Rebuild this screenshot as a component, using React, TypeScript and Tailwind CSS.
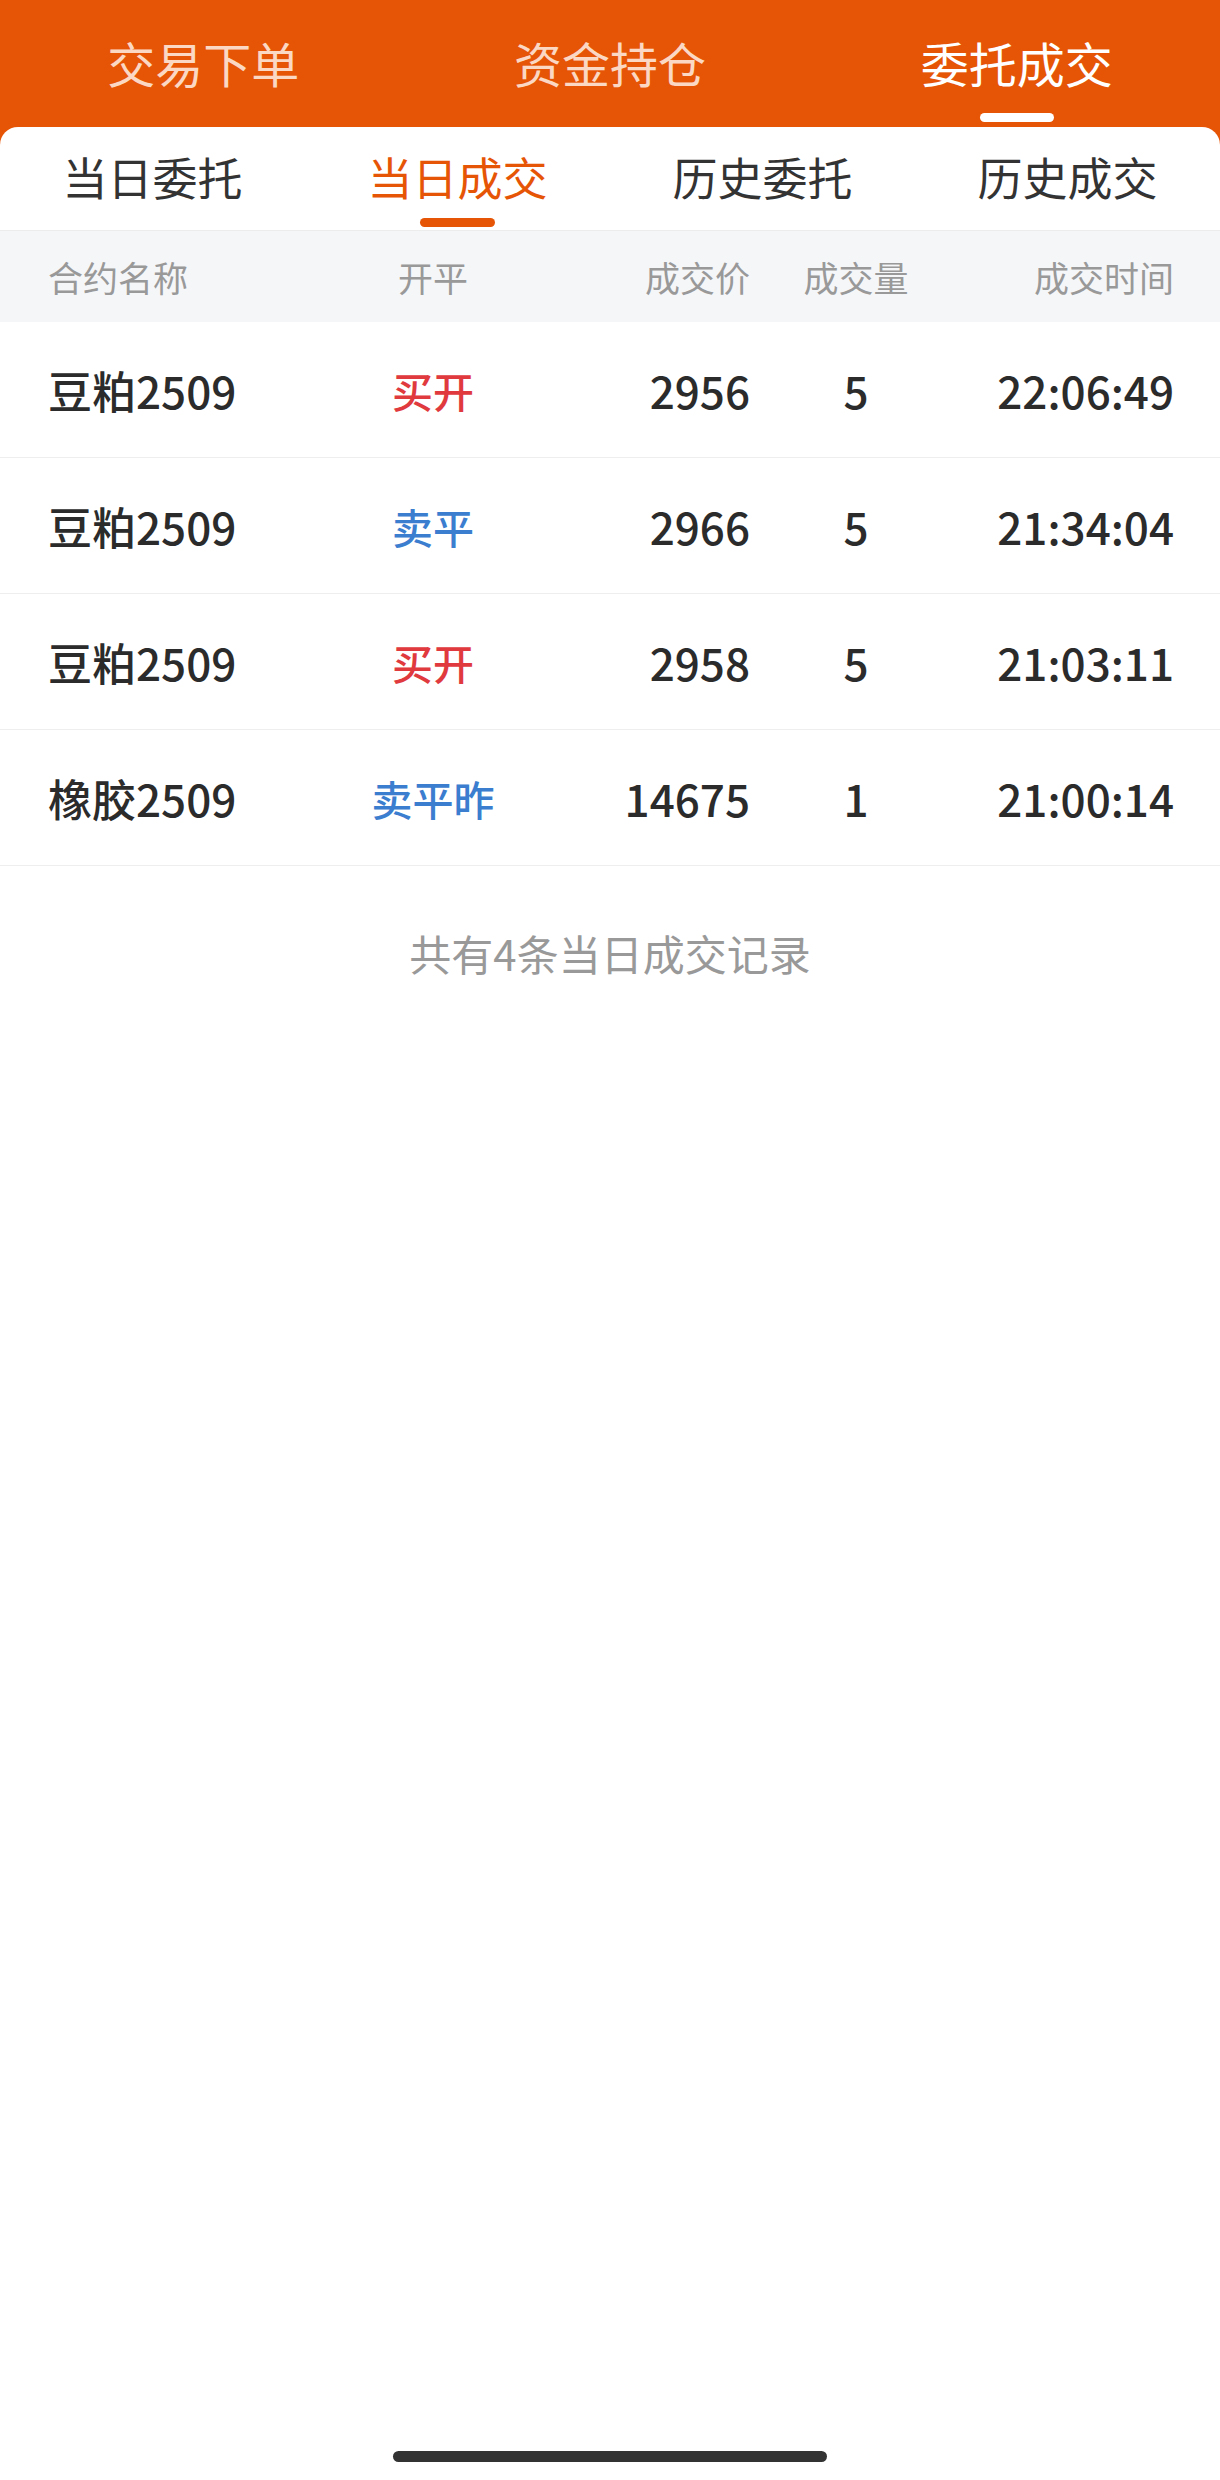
import React, { useState } from "react";

// --- Types ---
interface Trade {
  id: string;
  name: string;
  side: string;
  price: string;
  volume: string;
  time: string;
}

const trades: Trade[] = [
  { id: "1", name: "豆粕2509", side: "买开", price: "2956", volume: "5", time: "22:06:49" },
  { id: "2", name: "豆粕2509", side: "卖平", price: "2966", volume: "5", time: "21:34:04" },
  { id: "3", name: "豆粕2509", side: "买开", price: "2958", volume: "5", time: "21:03:11" },
  { id: "4", name: "橡胶2509", side: "卖平昨", price: "14675", volume: "1", time: "21:00:14" },
];

const mainTabs = ["交易下单", "资金持仓", "委托成交"];
const subTabs = ["当日委托", "当日成交", "历史委托", "历史成交"];

const cols = "grid grid-cols-[290px_190px_222px_212px_212px] items-center pl-[48px] pr-[46px]";

// --- Trade row ---
const TradeRow = ({ trade }: { trade: Trade }) => {
  const isBuy = trade.side.startsWith("买");
  return (
    <div className={`${cols} h-[136px] border-b border-[#eeeeee] text-[44px] leading-[44px] font-medium text-[#2b2b2b]`}>
      <span>{trade.name}</span>
      <span className={`text-center text-[41px] ${isBuy ? "text-[#e03a3e]" : "text-[#3b7dcf]"}`}>
        {trade.side}
      </span>
      <span className="text-right">{trade.price}</span>
      <span className="text-center">{trade.volume}</span>
      <span className="text-right">{trade.time}</span>
    </div>
  );
};

export default function App() {
  const [mainTab, setMainTab] = useState(2);
  const [subTab, setSubTab] = useState(1);

  return (
    <div
      className="w-[1220px] min-h-[2480px] flex flex-col bg-[#e65506]"
      style={{ fontFamily: '"Noto Sans CJK SC", "Noto Sans", sans-serif' }}
    >
      {/* Top tabs */}
      <div className="grid grid-cols-3 h-[127px]">
        {mainTabs.map((t, i) => (
          <button key={t} onClick={() => setMainTab(i)} className="flex flex-col items-center pt-[38px]">
            <span
              className={`text-[48px] leading-[48px] ${
                i === mainTab ? "text-white" : "text-[#fbd8c3]"
              }`}
            >
              {t}
            </span>
            <span
              className={`mt-[27px] h-[9px] w-[74px] rounded-full ${i === mainTab ? "bg-white" : "bg-transparent"}`}
            />
          </button>
        ))}
      </div>

      {/* Panel */}
      <div className="flex-1 flex flex-col bg-white rounded-t-[18px]">
        {/* Sub tabs */}
        <div className="grid grid-cols-4 h-[104px] border-b border-[#ececec]">
          {subTabs.map((t, i) => (
            <button key={t} onClick={() => setSubTab(i)} className="flex flex-col items-center pt-[27px]">
              <span
                className={`text-[45px] leading-[45px] ${
                  i === subTab ? "text-[#e65506]" : "text-[#333333]"
                }`}
              >
                {t}
              </span>
              <span
                className={`mt-[19px] h-[9px] w-[75px] rounded-full ${
                  i === subTab ? "bg-[#e65506]" : "bg-transparent"
                }`}
              />
            </button>
          ))}
        </div>

        {/* Table header */}
        <div className={`${cols} h-[91px] bg-[#f5f6f8] text-[35px] leading-[35px] text-[#999999]`}>
          <span>合约名称</span>
          <span className="text-center">开平</span>
          <span className="text-right">成交价</span>
          <span className="text-center">成交量</span>
          <span className="text-right">成交时间</span>
        </div>

        {/* Rows */}
        {trades.map((t) => (
          <TradeRow key={t.id} trade={t} />
        ))}

        <p className="pt-[66px] text-center text-[42px] leading-[42px] text-[#999999]">
          共有4条当日成交记录
        </p>

        {/* Home indicator */}
        <div className="mt-auto pb-[18px] flex justify-center">
          <div className="h-[11px] w-[434px] rounded-full bg-[#333333]" />
        </div>
      </div>
    </div>
  );
}
